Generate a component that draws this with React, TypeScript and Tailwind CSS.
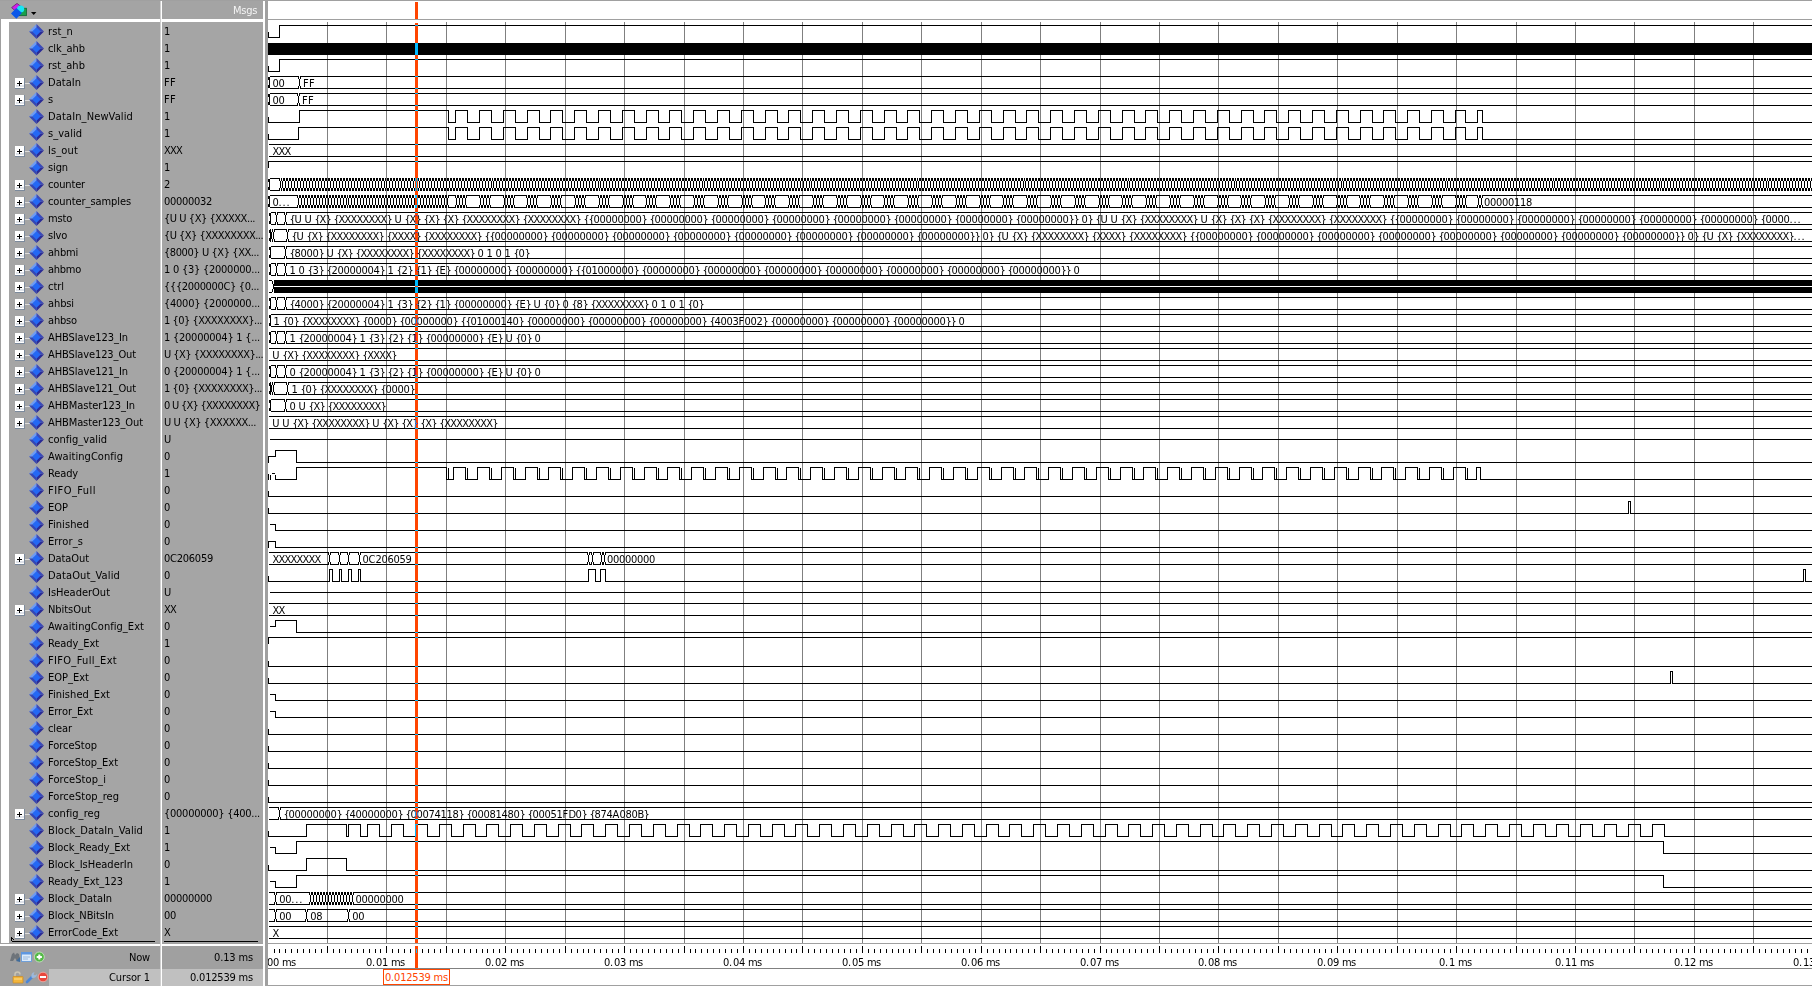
import React from "react";

const FONT = '11px "DejaVu Sans Condensed", "DejaVu Sans", sans-serif';

/* Advance widths, in px, of the 11px interface font. */
const ADV: Record<string, number> = {
  " ": 3, ".": 4, "{": 5, "}": 5, _: 6, X: 6, U: 7, E: 6, F: 6, C: 7, A: 7, B: 6, D: 7, H: 7, I: 4, M: 8, N: 7, O: 8,
  P: 6, R: 7, S: 6, V: 7, c: 5, f: 4, i: 3, j: 3, k: 5, l: 3, m: 9, r: 4, s: 5, t: 4, v: 5, x: 5, y: 5, w: 8,
};
const adv = (c: string) => ADV[c] ?? 6;
const widthOf = (t: string) => [...t].reduce((w, c) => w + adv(c), 0);

const ctx = document.createElement("canvas").getContext("2d");
function tracking(t: string) {
  if (!ctx) return 0;
  ctx.font = FONT;
  return (widthOf(t) - ctx.measureText(t).width) / t.length;
}

function T({ children }: { children: string }) {
  return <span className="whitespace-pre" style={{ letterSpacing: tracking(children) + "px" }}>{children}</span>;
}

type Label = [number, string];
type Wave =
  | { k: "line"; d: string }
  | { k: "bus"; start: number; x: number[]; labels: Label[] }
  | { k: "solid" }
  | { k: "ctrl" };
interface Signal { name: string; value: string; wave: Wave; bus?: boolean }

const END = 1812;

/* Digital trace: a list of "<level><x>" steps; the level holds until x. */
function dig(mark: "" | "v", ...steps: [string, number][]): Wave {
  const y: Record<string, number> = { H: 0, M: 6, L: 12 };
  let d = mark ? `M268 6V${y[steps[0][0]]}` : `M269 ${y[steps[0][0]]}`;
  steps.forEach(([l, x], i) => {
    if (i) d += `V${y[l]}`;
    d += `H${x}`;
  });
  return { k: "line", d };
}
const low = dig("v", ["L", END]);
const high = dig("v", ["H", END]);
const mid = dig("", ["M", END]);
const drop = dig("", ["M", 275], ["L", END]);
const range = (n: number) => Array.from({ length: n }, (_, i) => i);

function pulses(first: number, firstFall: number): Wave {
  const s: [string, number][] = [["L", first], ["H", firstFall]];
  range(43).forEach((k) => {
    const r = Math.round(455.1 + 23.8 * k);
    s.push(["L", r], ["H", k === 42 ? 1465 : r + 12]);
  });
  s.push(["L", 1477], ["H", 1482], ["L", END]);
  return dig("v", ...s);
}

function readyWave(): Wave {
  let d = "M268 6V12M270 12V7M271 6H274M275 7V12H296V0H446V12H448V0V12";
  range(43).forEach((k) => {
    const r = Math.round(453.2 + 23.8 * k);
    d += `H${r}V0H${r + 12}V12H${r + 14}V0V12`;
  });
  return { k: "line", d: d + `H1476V0H1480V12H${END}` };
}

function blockValid(): Wave {
  const s: [string, number][] = [["L", 306], ["H", 346], ["L", 348], ["H", 360]];
  range(55).forEach((k) => {
    const r = Math.round(367.4 + 23.78 * k);
    s.push(["L", r], ["H", r + 12]);
  });
  s.push(["L", END]);
  return dig("v", ...s);
}

/* start: x of the opening edge, or 0 when the bus runs in from the left */
const bus = (start: number, x: number[], labels: Label[] = []): Wave => ({ k: "bus", start, x, labels });
const low1 = (a: number, b: number) => dig("v", ["L", a], ["H", b], ["L", END]);
const Z = "{00000000}";
const rep = (s: string, n: number) => Array(n).fill(s).join(" ");
const X8 = "{XXXXXXXX}";

const sampleEdges = [
  ...range(50).map((k) => Math.round(298 + 2.97 * k)), 447,
  ...range(43).flatMap((k) => [0, 3, 6, 9].map((o) => Math.round(455.9 + 23.8 * k) + o)),
  1478, 1481,
];
const counterEdges = range(516).map((k) => Math.round(279.5 + 2.972 * k));

const msto = `{U U {X} ${X8} U {X} {X} {X} ${X8} ${X8} {${rep(Z, 8)}} 0} {U U {X} ${X8} U {X} {X} {X} ${X8} ${X8} {${rep(Z, 6)} {0000...`;
const slvo = `{U {X} ${X8} {XXXX} ${X8} {${rep(Z, 8)}} 0} {U {X} ${X8} {XXXX} ${X8} {${rep(Z, 8)}} 0} {U {X} ${X8}...`;

const s = (name: string, value: string, wave: Wave): Signal => ({ name, value, wave });
const b = (name: string, value: string, wave: Wave): Signal => ({ name, value, wave, bus: true });

const SIGNALS: Signal[] = [
  s("rst_n", "1", dig("v", ["L", 279], ["H", END])),
  s("clk_ahb", "1", { k: "solid" }),
  s("rst_ahb", "1", dig("v", ["L", 279], ["H", END])),
  b("DataIn", "FF", bus(268, [299], [[272.4, "00"], [303, "FF"]])),
  b("s", "FF", bus(268, [298], [[272.4, "00"], [302, "FF"]])),
  s("DataIn_NewValid", "1", pulses(299, 448)),
  s("s_valid", "1", pulses(298, 448)),
  b("ls_out", "XXX", bus(0, [], [[272.4, "XXX"]])),
  s("sign", "1", high),
  b("counter", "2", bus(268, counterEdges)),
  b("counter_samples", "00000032", bus(268, sampleEdges, [[272.4, "0..."], [1484, "00000118"]])),
  b("msto", "{U U {X} {XXXXX...", bus(269, [276, 285], [[289.4, msto]])),
  b("slvo", "{U {X} {XXXXXXXX...", bus(269, [271, 273, 287], [[291.4, slvo]])),
  b("ahbmi", "{8000} U {X} {XX...", bus(269, [285], [[289.4, `{8000} U {X} ${X8} ${X8} 0 1 0 1 {0}`]])),
  b("ahbmo", "1 0 {3} {2000000...", bus(269, [276, 285], [[289.4, `1 0 {3} {20000004} 1 {2} {1} {E} ${Z} ${Z} {{01000000} ${rep(Z, 7)}} 0`]])),
  b("ctrl", "{{{2000000C} {0...", { k: "ctrl" }),
  b("ahbsi", "{4000} {2000000...", bus(269, [276, 285], [[289.4, `{4000} {20000004} 1 {3} {2} {1} ${Z} {E} U {0} 0 {8} ${X8} 0 1 0 1 {0}`]])),
  b("ahbso", "1 {0} {XXXXXXXX}...", bus(269, [], [[273.4, `1 {0} ${X8} {0000} ${Z} {{01000140} ${rep(Z, 3)} {4003F002} ${rep(Z, 3)}} 0`]])),
  b("AHBSlave123_In", "1 {20000004} 1 {...", bus(269, [276, 285], [[289.4, `1 {20000004} 1 {3} {2} {1} ${Z} {E} U {0} 0`]])),
  b("AHBSlave123_Out", "U {X} {XXXXXXXX}...", bus(0, [], [[272.2, `U {X} ${X8} {XXXX}`]])),
  b("AHBSlave121_In", "0 {20000004} 1 {...", bus(269, [276, 285], [[289.4, `0 {20000004} 1 {3} {2} {1} ${Z} {E} U {0} 0`]])),
  b("AHBSlave121_Out", "1 {0} {XXXXXXXX}...", bus(269, [271, 273, 287], [[291.4, `1 {0} ${X8} {0000}`]])),
  b("AHBMaster123_In", "0 U {X} {XXXXXXXX}", bus(269, [285], [[289.4, `0 U {X} ${X8}`]])),
  b("AHBMaster123_Out", "U U {X} {XXXXXX...", bus(0, [], [[272.2, `U U {X} ${X8} U {X} {X} {X} ${X8}`]])),
  s("config_valid", "U", mid),
  s("AwaitingConfig", "0", { k: "line", d: `M268 12V6H275V0H296V12H${END}` }),
  s("Ready", "1", readyWave()),
  s("FIFO_Full", "0", low),
  s("EOP", "0", low1(1628, 1630)),
  s("Finished", "0", drop),
  s("Error_s", "0", { k: "line", d: `M268 12V6H275V12H${END}` }),
  b("DataOut", "0C206059", bus(0, [329, 339, 348, 359, 588, 592, 601, 604], [[272.4, "XXXXXXXX"], [362.4, "0C206059"], [607, "00000000"]])),
  s("DataOut_Valid", "0", dig("v", ["L", 329], ["H", 332], ["L", 339], ["H", 341], ["L", 348], ["H", 351], ["L", 358], ["H", 360],
    ["L", 588], ["H", 595], ["L", 600], ["H", 605], ["L", 1803], ["H", 1805], ["L", END])),
  s("IsHeaderOut", "U", mid),
  b("NbitsOut", "XX", bus(0, [], [[272.4, "XX"]])),
  s("AwaitingConfig_Ext", "0", dig("", ["M", 275], ["H", 296], ["L", END])),
  s("Ready_Ext", "1", high),
  s("FIFO_Full_Ext", "0", low),
  s("EOP_Ext", "0", low1(1670, 1672)),
  s("Finished_Ext", "0", drop),
  s("Error_Ext", "0", drop),
  s("clear", "0", low),
  s("ForceStop", "0", low),
  s("ForceStop_Ext", "0", low),
  s("ForceStop_i", "0", low),
  s("ForceStop_reg", "0", low),
  b("config_reg", "{00000000} {400...", bus(0, [279], [[283.4, `${Z} {40000000} {00074118} {00081480} {00051FD0} {874A080B}`]])),
  s("Block_DataIn_Valid", "1", blockValid()),
  s("Block_Ready_Ext", "1", dig("", ["M", 275], ["L", 296], ["H", 1663], ["L", END])),
  s("Block_IsHeaderIn", "0", low1(306, 346)),
  s("Ready_Ext_123", "1", dig("", ["M", 275], ["L", 296], ["H", 1663], ["L", END])),
  b("Block_DataIn", "00000000", bus(0, [275, ...range(13).map((k) => 310 + 3 * k), 349, 352], [[279.2, "00..."], [355.4, "00000000"]])),
  b("Block_NBitsIn", "00", bus(0, [275, 306, 348], [[279.2, "00"], [310.2, "08"], [352.2, "00"]])),
  b("ErrorCode_Ext", "X", bus(0, [], [[272.4, "X"]])),
];

function SvgLabel({ x, y, text }: { x: number; y: number; text: string }) {
  let at = x;
  const xs = [...text].map((c) => {
    const v = at;
    at += adv(c);
    return v;
  });
  return (
    <text x={xs.join(" ")} y={y} fill="#000" fontSize={11} xmlSpace="preserve">{text}</text>
  );
}

function Trace({ wave, row }: { wave: Wave; row: number }) {
  const y = 25 + 17 * row;
  if (wave.k === "solid") return <rect x={268} y={y + 1} width={1544} height={12} />;
  if (wave.k === "ctrl")
    return (
      <g>
        <path transform={`translate(.5 ${y + 0.5})`} d="M268 0H271M272 .5V3.5M273 3.5V8.5M272 8.5V11.5M268 12H271" stroke="#000" fill="none" />
        <rect x={274} y={y} width={1538} height={6} />
        <rect x={274} y={y + 6} width={1538} height={1} fill="#fff" />
        <rect x={274} y={y + 7} width={1538} height={6} />
      </g>
    );
  if (wave.k === "line")
    return <path transform={`translate(.5 ${y + 0.5})`} d={wave.d} stroke="#000" fill="none" />;
  let d = "";
  let from = 268;
  if (wave.start) {
    d += `M${wave.start} .5V3.5M${wave.start} 8.5V11.5M${wave.start + 1} .5V11.5`;
    from = wave.start + 1;
  }
  wave.x.forEach((x) => {
    if (x - 1 > from) d += `M${from} 0H${x - 1}M${from} 12H${x - 1}`;
    d += `M${x - 1} -.5V2.5M${x - 1} 9.5V12.5M${x} 2.5V9.5M${x + 1} -.5V2.5M${x + 1} 9.5V12.5`;
    from = x + 1;
  });
  d += `M${from} 0H${END}M${from} 12H${END}`;
  return (
    <g>
      <path transform={`translate(.5 ${y + 0.5})`} d={d} stroke="#000" fill="none" />
      {wave.labels.map(([x, t]) => <SvgLabel key={x} x={x} y={y + 11} text={t} />)}
    </g>
  );
}

function Diamond() {
  return (
    <svg className="h-[15px] w-[15px] shrink-0" viewBox="0 0 15 15">
      <path d="M7.5 0L0 7.5H7.5Z" fill="#6f9bf2" />
      <path d="M7.5 0L15 7.5H7.5Z" fill="#3b49b8" />
      <path d="M0 7.5L7.5 15V7.5Z" fill="#3446b4" />
      <path d="M15 7.5L7.5 15V7.5Z" fill="#2a2a96" />
      <path d="M7.5 3.2L11.8 7.5L7.5 11.8L3.2 7.5Z" fill="#2468f4" />
    </svg>
  );
}

function Expander() {
  return (
    <svg className="h-[11px] w-[15px] shrink-0" viewBox="0 0 15 11" shapeRendering="crispEdges">
      <rect x="0" y="0" width="10" height="11" rx="1" fill="#7c8a9c" />
      <rect x="0" y="0" width="9" height="10" fill="#fff" />
      <rect x="1" y="7" width="8" height="2" fill="#dfe3ea" />
      <path d="M2 5.5H7M4.5 3V8" stroke="#000" strokeWidth="1" />
      <path d="M10 5.5H15" stroke="#dcdcdc" />
    </svg>
  );
}

function HeaderIcon() {
  return (
    <svg className="h-[18px] w-[30px]" viewBox="0 0 30 18">
      <path d="M.6 4.6L6 .4L10.5 4L5 8.5Z" fill="#d020e8" stroke="#5a1064" strokeWidth=".7" />
      <rect x="8.5" y="5.2" width="7" height="7.5" fill="#18a04c" stroke="#0a5c2a" strokeWidth=".7" />
      <circle cx="9.6" cy="6" r="3.6" fill="#18e4f4" />
      <path d="M5.3 5L11 10L5.3 15.8L0 10.4Z" fill="#0c58e8" />
      <path d="M20 9H25.4L22.7 12Z" fill="#000" />
    </svg>
  );
}

function NowIcons() {
  return (
    <svg className="h-[13px] w-[36px]" viewBox="0 0 36 13">
      <path d="M0 10L2 3L4 1.5L5 4L7 2L9 3L10 9L7 10L5 7L3 10Z" fill="#6e747a" />
      <path d="M6 10L10 6V11Z" fill="#3f6c9c" />
      <rect x="11.5" y="1.5" width="10" height="9" fill="#dcebfb" stroke="#6f9fd8" />
      <rect x="11" y="1" width="11" height="2.5" fill="#5f97e0" />
      <path d="M13 6H20M13 8H18" stroke="#9ab8dc" />
      <circle cx="29.3" cy="6" r="5" fill="#55b848" stroke="#c9e8c2" strokeWidth=".8" />
      <path d="M29.3 3.4V8.6M26.7 6H31.9" stroke="#fff" strokeWidth="2" />
    </svg>
  );
}

function CursorIcons() {
  return (
    <svg className="h-[13px] w-[36px]" viewBox="0 0 36 13">
      <path d="M3 6V3.5Q3 1 5.5 1T8 3.5" fill="none" stroke="#c9c4b4" strokeWidth="1.6" />
      <rect x="1" y="5.5" width="10" height="6.5" rx=".5" fill="#f2b53c" stroke="#c88a24" strokeWidth=".7" />
      <path d="M2 8H10" stroke="#ffe08a" />
      <path d="M15 11L20 6" stroke="#4a86d8" strokeWidth="2.6" strokeLinecap="round" />
      <path d="M19.5 6.5Q18.5 2 22.5 1L21.5 3.5L23 4.5L25 3Q25 7 20.5 7Z" fill="#9db9dc" />
      <circle cx="31" cy="6" r="4.8" fill="#e8473c" stroke="#f3b3aa" strokeWidth=".8" />
      <path d="M28 6H34" stroke="#fff" strokeWidth="2" />
    </svg>
  );
}

const gridX = (k: number) => Math.round(267.57 + 59.43 * k);

function Plot() {
  return (
    <svg className="block h-[921px] w-[1544px]" viewBox="268 22 1544 921" shapeRendering="crispEdges">
      {range(25).map((k) => <path key={k} d={`M${gridX(k + 1) + 0.5} 22V943`} stroke="#808080" />)}
      {SIGNALS.map((sig, i) => <Trace key={sig.name} wave={sig.wave} row={i} />)}
    </svg>
  );
}

function Timeline() {
  return (
    <svg className="block h-[22px] w-[1544px]" viewBox="268 946 1544 22">
      {range(259).map((i) => {
        const n = i + 1;
        const x = Math.round(267.57 + 5.943 * n) + 0.5;
        return <path key={n} d={`M${x} ${n % 10 ? 949 : 946}V953`} stroke="#000" shapeRendering="crispEdges" />;
      })}
      <SvgLabel x={267} y={966} text="00 ms" />
      {range(13).map((i) => {
        const t = (i + 1 === 10 ? "0.1" : `0.${String(i + 1).padStart(2, "0")}`) + " ms";
        return <SvgLabel key={i} x={gridX(2 * (i + 1)) - Math.round(widthOf(t) / 2)} y={966} text={t} />;
      })}
    </svg>
  );
}

export default function App() {
  return (
    <div className="flex h-[986px] w-[1812px] overflow-hidden border-t border-[#a0a0a0] bg-[#a0a0a0] font-['DejaVu_Sans_Condensed','DejaVu_Sans',sans-serif] text-[11px] leading-[17px] text-black">
      {/* signal names */}
      <section className="flex w-[160px] shrink-0 flex-col">
        <div className="flex h-[18px] items-start bg-[#a4a4a4] pl-[11px] pt-[2px]"><HeaderIcon /></div>
        <div className="ml-px flex h-[924px] border-t-[3px] border-white bg-white pl-2">
          <div className="flex w-[151px] flex-col bg-[#a5a5a5] pt-px">
            {SIGNALS.map((sig) => (
              <div key={sig.name} className="flex h-[17px] shrink-0 items-center pl-[6px]">
                <div className="mt-px flex w-[14px] shrink-0">{sig.bus && <Expander />}</div>
                <Diamond />
                <div className="ml-[4px]"><T>{sig.name}</T></div>
              </div>
            ))}
            <svg className="mt-[-4px] h-[5px] w-[147px]" viewBox="0 0 147 5" shapeRendering="crispEdges">
              <path d="M2.5 0V4M2 .5L5 2.5" stroke="#000" />
              <path d="M3 4.5H146" stroke="#000" />
            </svg>
          </div>
        </div>
        <div className="h-px bg-[#a0a0a0]" />
        <div className="h-[2px] bg-white" />
        <div className="flex h-[23px] items-center bg-[#a0a0a0] pl-[10px] pr-[10px]">
          <NowIcons />
          <div className="ml-auto"><T>Now</T></div>
        </div>
        <div className="flex h-[17px] items-center bg-[#a0a0a0] pl-[12px]">
          <CursorIcons />
          <div className="ml-[1px] flex h-[17px] grow justify-end bg-[#c0c0c0] pr-[10px]"><T>Cursor 1</T></div>
        </div>
      </section>
      <div className="w-[2px] shrink-0 border-l border-[#d0d0d0] bg-white" />

      {/* values at the cursor */}
      <section className="flex w-[101px] shrink-0 flex-col">
        <div className="flex h-[18px] justify-end bg-[#a4a4a4] pr-[6px] pt-px text-[#f4f4f4]"><T>Msgs</T></div>
        <div className="h-[924px] border-t-[3px] border-white bg-[#a5a5a5] pt-px">
          {SIGNALS.map((sig) => (
            <div key={sig.name} className="h-[17px] overflow-hidden pl-[2px]"><T>{sig.value}</T></div>
          ))}
          <div className="ml-[2px] h-px w-[94px] bg-black" />
        </div>
        <div className="h-px bg-[#a0a0a0]" />
        <div className="h-[2px] bg-white" />
        <div className="flex h-[23px] items-center justify-end bg-[#a0a0a0] pr-[10px]"><T>0.13 ms</T></div>
        <div className="flex h-[17px] justify-end bg-[#c0c0c0] pr-[10px]"><T>0.012539 ms</T></div>
      </section>
      <div className="w-[5px] shrink-0 border-l-2 border-white bg-[#a0a0a0]" />

      {/* waveforms */}
      <section className="relative flex w-[1544px] shrink-0 flex-col bg-white">
        <div className="h-[18px] bg-white" />
        <div className="h-px bg-[#a0a0a0]" />
        <div className="h-[2px] bg-white" />
        <Plot />
        <div className="h-px bg-[#a0a0a0]" />
        <div className="h-[2px] bg-white" />
        <Timeline />
        <div className="h-px bg-[#808080]" />
        <div className="h-[17px] border-b border-[#a0a0a0]" />
        <div className="absolute left-[147px] top-px h-[17px] w-[3px] bg-[#ff4500]" />
        <div className="absolute left-[147px] top-[22px] h-[920px] w-[3px] bg-[#00baff] mix-blend-difference" />
        <div className="absolute left-[147px] top-[945px] h-[22px] w-[3px] bg-[#00baff] mix-blend-difference" />
        <div className="absolute left-[115px] top-[968px] h-[16px] w-[67px] border border-[#ff4500] bg-white pl-px leading-[15px] text-[#ff4500]">
          <T>0.012539 ms</T>
        </div>
      </section>
    </div>
  );
}
